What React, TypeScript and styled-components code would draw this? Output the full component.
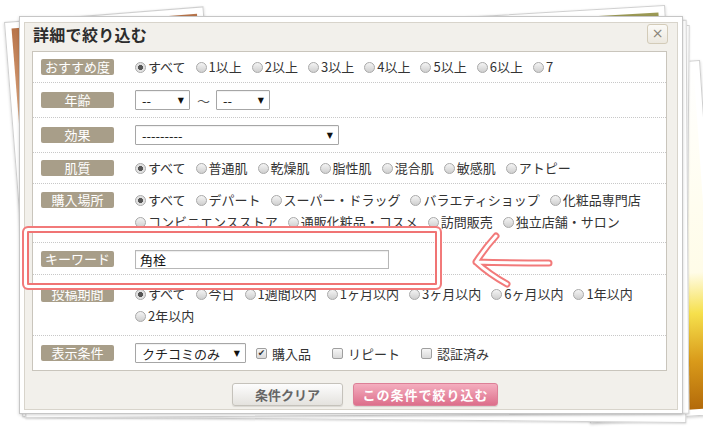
import React from 'react';
import styled, { createGlobalStyle } from 'styled-components';

const Global = createGlobalStyle`
  html, body { margin: 0; padding: 0; background: #fff; }
  body { font-family: "Noto Sans CJK JP", "Noto Sans", sans-serif; }
`;

const Stage = styled.div`
  position: relative;
  width: 703px;
  height: 427px;
  overflow: hidden;
  background: #fff;
  box-sizing: border-box;
  padding: 16px 0 0 19px;
`;

const PhotoBase = styled.div`
  position: absolute;
  background: #fff;
  border: 1px solid #cfcfcf;
  box-shadow: 0 1px 3px rgba(0, 0, 0, 0.2);
  box-sizing: border-box;
  padding: 6px;
`;

const LeftPhoto = styled(PhotoBase)`
  left: 4px;
  top: 22px;
  width: 200px;
  height: 390px;
  transform: rotate(-4.5deg);
  transform-origin: top left;
`;

const TopPhoto = styled(PhotoBase)`
  left: 465px;
  top: 5px;
  width: 200px;
  height: 200px;
  transform: rotate(-3.4deg);
  transform-origin: top right;
`;

const RightPhoto = styled(PhotoBase)`
  left: 565px;
  top: 60px;
  width: 135px;
  height: 355px;
  transform: rotate(-4deg);
  transform-origin: top right;
`;

const PhotoImage = styled.div<{ $tone: 'brown' | 'olive' | 'gold' }>`
  width: 100%;
  height: 100%;
  background: ${(p) =>
    p.$tone === 'brown'
      ? 'linear-gradient(180deg, #b8744a 0%, #d9a27a 22%, #f2e2d2 38%, #fff 50%)'
      : p.$tone === 'olive'
      ? 'linear-gradient(180deg, #9c9a55 0%, #b7b573 100%)'
      : 'linear-gradient(180deg, #fff 0%, #fffce8 60%, #f6e04c 72%, #d99a1a 86%, #b36a0a 100%)'};
`;

const Sheet = styled.div<{ $tilt: number; $drop: number }>`
  position: absolute;
  left: 24px;
  top: 22px;
  width: 662px;
  height: ${(p) => 392 + p.$drop}px;
  background: #fff;
  border: 1px solid #d2d2d2;
  box-shadow: 0 1px 2px rgba(0, 0, 0, 0.15);
  transform: rotate(${(p) => p.$tilt}deg);
`;

const Dialog = styled.div`
  position: relative;
  z-index: 2;
  width: 664px;
  box-sizing: border-box;
  background: #fff;
  border: 1px solid #c6c6c6;
  padding: 5px 4px 3px 4px;
  box-shadow: 0 1px 3px rgba(0, 0, 0, 0.18);
`;

const Inner = styled.div`
  background: #f2f0eb;
  border: 1px solid #d8d4cb;
  height: 388px;
  box-sizing: border-box;
  display: flex;
  flex-direction: column;
`;

const TitleBar = styled.div`
  height: 28px;
  display: flex;
  align-items: center;
  justify-content: space-between;
  padding: 0 9px 6px 8px;
  box-sizing: border-box;
`;

const Title = styled.h1`
  margin: 0;
  font-size: 16px;
  font-weight: bold;
  color: #2c2c2c;
  letter-spacing: 0.3px;
`;

const CloseButton = styled.div`
  width: 21px;
  height: 20px;
  box-sizing: border-box;
  border: 1px solid #d3cbb8;
  border-radius: 3px;
  background: linear-gradient(#fbfaf7, #ece8df);
  color: #8a8478;
  font-size: 14px;
  line-height: 17px;
  text-align: center;
  font-family: "DejaVu Sans", sans-serif;
`;

const ContentBox = styled.div`
  margin: 0 10px 0 7px;
  background: #fff;
  border: 1px solid #c9c5bc;
  height: 320px;
  box-sizing: border-box;
`;

const Row = styled.div<{ $pt: number; $pb: number; $last?: boolean }>`
  display: grid;
  grid-template-columns: 73px 1fr;
  column-gap: 21px;
  align-items: start;
  padding: ${(p) => p.$pt}px 8px ${(p) => p.$pb}px 8px;
  border-bottom: ${(p) => (p.$last ? 'none' : '1px dotted #c8c8c8')};
`;

const Label = styled.div`
  width: 73px;
  height: 16px;
  margin-top: 3px;
  background: #a89e89;
  border-radius: 2px;
  color: #fff;
  font-size: 13px;
  line-height: 16px;
  text-align: center;
`;

const Options = styled.div`
  display: flex;
  flex-wrap: wrap;
  column-gap: 10px;
  align-items: center;
  line-height: 22px;
  font-size: 13px;
  color: #333;
`;

const Option = styled.label`
  display: inline-flex;
  align-items: center;
  gap: 2px;
  white-space: nowrap;
  height: 22px;
`;

const Radio = styled.span<{ $on?: boolean }>`
  width: 11px;
  height: 11px;
  box-sizing: border-box;
  border-radius: 50%;
  border: 1px solid #a9a9a9;
  background: ${(p) =>
    p.$on
      ? 'radial-gradient(circle, #555 0 2.3px, #ddd 2.8px, #eee 100%)'
      : 'linear-gradient(#f4f4f4, #cfcfcf)'};
`;

const Controls = styled.div`
  display: flex;
  align-items: center;
  height: 22px;
  font-size: 13px;
  color: #333;
`;

const FakeSelect = styled.div<{ $w: number }>`
  width: ${(p) => p.$w}px;
  height: 20px;
  box-sizing: border-box;
  border: 1px solid #a6a6a6;
  border-radius: 1px;
  background: #fff;
  display: flex;
  align-items: center;
  justify-content: space-between;
  padding: 0 5px 0 6px;
  font-size: 13px;
  color: #222;
  box-shadow: inset 0 1px 1px rgba(0, 0, 0, 0.06);
`;

const Caret = styled.span`
  font-size: 8px;
  color: #111;
  font-family: "DejaVu Sans", sans-serif;
`;

const Tilde = styled.span`
  margin: 0 6px 0 7px;
  color: #555;
`;

const TextInput = styled.div`
  width: 254px;
  height: 19px;
  box-sizing: border-box;
  border: 1px solid #b7b7b7;
  box-shadow: inset 0 1px 1px rgba(0, 0, 0, 0.08);
  font-size: 13px;
  line-height: 17px;
  padding-left: 4px;
  color: #111;
`;

const CheckItem = styled.label`
  display: inline-flex;
  align-items: center;
  gap: 5px;
  margin-left: 10px;
  & + & {
    margin-left: 21px;
  }
`;

const CheckBox = styled.span<{ $on?: boolean }>`
  width: 11px;
  height: 11px;
  box-sizing: border-box;
  border: 1px solid #9f9f9f;
  border-radius: 2px;
  background: linear-gradient(#f6f6f6, #d9d9d9);
  font-size: 9px;
  line-height: 9px;
  text-align: center;
  color: #333;
  font-family: "DejaVu Sans", sans-serif;
`;

const ButtonBar = styled.div`
  display: flex;
  justify-content: center;
  gap: 10px;
  padding: 12px 0 0 28px;
`;

const ClearButton = styled.div`
  width: 111px;
  height: 23px;
  box-sizing: border-box;
  border: 1px solid #c5c2bb;
  border-radius: 3px;
  background: linear-gradient(#fdfdfd, #e4e2de);
  box-shadow: 0 1px 1px rgba(0, 0, 0, 0.1);
  color: #666;
  font-weight: bold;
  font-size: 13px;
  line-height: 21px;
  text-align: center;
`;

const SubmitButton = styled.div`
  width: 145px;
  height: 23px;
  box-sizing: border-box;
  border: 1px solid #dc8097;
  border-radius: 3px;
  background: linear-gradient(#f4aebf, #dd6f8b);
  box-shadow: 0 1px 1px rgba(0, 0, 0, 0.12);
  color: #fff;
  font-weight: bold;
  font-size: 13px;
  letter-spacing: 1px;
  line-height: 21px;
  text-align: center;
`;

const Highlight = styled.div`
  position: absolute;
  z-index: 5;
  left: 22px;
  top: 226px;
  width: 420px;
  height: 64px;
  box-sizing: border-box;
  border: 2px solid #f27a7a;
  border-radius: 6px;
  box-shadow: inset 0 0 0 3px #fff, inset 0 0 0 5px #f07474;
`;

const Arrow = styled.svg`
  position: absolute;
  z-index: 5;
  left: 465px;
  top: 228px;
`;

type Opt = { t: string; on?: boolean };

const RadioGroup: React.FC<{ items: Opt[] }> = ({ items }) => (
  <Options>
    {items.map((o) => (
      <Option key={o.t}>
        <Radio $on={o.on} />
        {o.t}
      </Option>
    ))}
  </Options>
);

const arrowPath = 'M31 8 Q 20 20 11 34 Q 24 46 42 56 M11 34 Q 45 35 84 35';

export default function App() {
  return (
    <>
      <Global />
      <Stage>
        <LeftPhoto>
          <PhotoImage $tone="brown" />
        </LeftPhoto>
        <TopPhoto>
          <PhotoImage $tone="olive" />
        </TopPhoto>
        <RightPhoto>
          <PhotoImage $tone="gold" />
        </RightPhoto>
        <Sheet $tilt={0.5} $drop={4} />
        <Sheet $tilt={-0.4} $drop={0} />

        <Dialog>
          <Inner>
            <TitleBar>
              <Title>詳細で絞り込む</Title>
              <CloseButton>×</CloseButton>
            </TitleBar>
            <ContentBox>
              <Row $pt={4} $pb={4}>
                <Label>おすすめ度</Label>
                <RadioGroup
                  items={[
                    { t: 'すべて', on: true },
                    { t: '1以上' },
                    { t: '2以上' },
                    { t: '3以上' },
                    { t: '4以上' },
                    { t: '5以上' },
                    { t: '6以上' },
                    { t: '7' },
                  ]}
                />
              </Row>
              <Row $pt={6} $pb={6}>
                <Label>年齢</Label>
                <Controls>
                  <FakeSelect $w={55}>
                    <span>--</span>
                    <Caret>▼</Caret>
                  </FakeSelect>
                  <Tilde>〜</Tilde>
                  <FakeSelect $w={54}>
                    <span>--</span>
                    <Caret>▼</Caret>
                  </FakeSelect>
                </Controls>
              </Row>
              <Row $pt={6} $pb={6}>
                <Label>効果</Label>
                <Controls>
                  <FakeSelect $w={204}>
                    <span>---------</span>
                    <Caret>▼</Caret>
                  </FakeSelect>
                </Controls>
              </Row>
              <Row $pt={4} $pb={4}>
                <Label>肌質</Label>
                <RadioGroup
                  items={[
                    { t: 'すべて', on: true },
                    { t: '普通肌' },
                    { t: '乾燥肌' },
                    { t: '脂性肌' },
                    { t: '混合肌' },
                    { t: '敏感肌' },
                    { t: 'アトピー' },
                  ]}
                />
              </Row>
              <Row $pt={5} $pb={9}>
                <Label>購入場所</Label>
                <RadioGroup
                  items={[
                    { t: 'すべて', on: true },
                    { t: 'デパート' },
                    { t: 'スーパー・ドラッグ' },
                    { t: 'バラエティショップ' },
                    { t: '化粧品専門店' },
                    { t: 'コンビニエンスストア' },
                    { t: '通販化粧品・コスメ' },
                    { t: '訪問販売' },
                    { t: '独立店舗・サロン' },
                  ]}
                />
              </Row>
              <Row $pt={5} $pb={4}>
                <Label>キーワード</Label>
                <Controls>
                  <TextInput>角栓</TextInput>
                </Controls>
              </Row>
              <Row $pt={8} $pb={8}>
                <Label>投稿期間</Label>
                <RadioGroup
                  items={[
                    { t: 'すべて', on: true },
                    { t: '今日' },
                    { t: '1週間以内' },
                    { t: '1ヶ月以内' },
                    { t: '3ヶ月以内' },
                    { t: '6ヶ月以内' },
                    { t: '1年以内' },
                    { t: '2年以内' },
                  ]}
                />
              </Row>
              <Row $pt={6} $pb={5} $last>
                <Label>表示条件</Label>
                <Controls>
                  <FakeSelect $w={111}>
                    <span>クチコミのみ</span>
                    <Caret>▼</Caret>
                  </FakeSelect>
                  <CheckItem>
                    <CheckBox $on>✔</CheckBox>
                    購入品
                  </CheckItem>
                  <CheckItem>
                    <CheckBox />
                    リピート
                  </CheckItem>
                  <CheckItem>
                    <CheckBox />
                    認証済み
                  </CheckItem>
                </Controls>
              </Row>
            </ContentBox>
            <ButtonBar>
              <ClearButton>条件クリア</ClearButton>
              <SubmitButton>この条件で絞り込む</SubmitButton>
            </ButtonBar>
          </Inner>
        </Dialog>

        <Highlight />
        <Arrow width="95" height="66" viewBox="0 0 95 66">
          <path d={arrowPath} fill="none" stroke="#f27a7a" strokeWidth="7" strokeLinecap="round" strokeLinejoin="round" />
          <path d={arrowPath} fill="none" stroke="#fff" strokeWidth="3" strokeLinecap="round" strokeLinejoin="round" />
        </Arrow>
      </Stage>
    </>
  );
}
